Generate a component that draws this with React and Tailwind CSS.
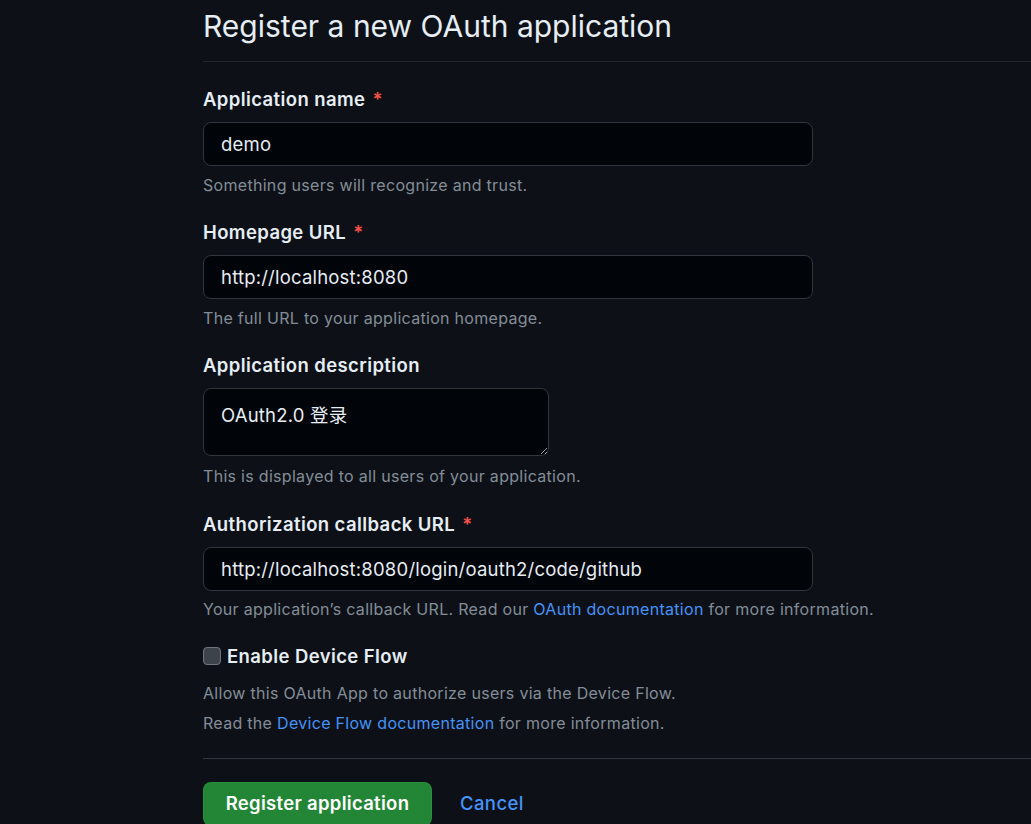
const font = { fontFamily: '"Inter", "Noto Sans CJK SC", sans-serif' };

function Label({ children, required }) {
  return (
    <label className="block text-[18.5px] font-semibold leading-[22px] tracking-[0.4px] text-[#e6edf3]">
      {children}
      {required && <span className="ml-[7px] text-[#f85149]">*</span>}
    </label>
  );
}

function Help({ children }) {
  return <p className="text-[16px] leading-[20px] tracking-[0.3px] text-[#848d97]">{children}</p>;
}

function TextInput({ value }) {
  return (
    <input
      readOnly
      value={value}
      className="mt-3 block h-[44px] w-[610px] rounded-lg border border-[#30363d] bg-[#010409] px-[17px] text-[18.5px] tracking-[0.2px] text-[#e6edf3] outline-none"
    />
  );
}

export default function App() {
  return (
    <div className="min-h-[824px] overflow-hidden bg-[#0d1117] pl-[203px] pt-[6px]" style={font}>
      <h1 className="border-b border-[#21262d] pb-[15px] text-[30px] font-normal leading-[40px] text-[#e6edf3]">
        Register a new OAuth application
      </h1>

      <div className="mt-[26px]">
        <Label required>Application name</Label>
        <TextInput value="demo" />
        <div className="mt-[9px]">
          <Help>Something users will recognize and trust.</Help>
        </div>
      </div>

      <div className="mt-[26px]">
        <Label required>Homepage URL</Label>
        <TextInput value="http://localhost:8080" />
        <div className="mt-[9px]">
          <Help>The full URL to your application homepage.</Help>
        </div>
      </div>

      <div className="mt-[26px]">
        <Label>Application description</Label>
        <textarea
          readOnly
          value="OAuth2.0 登录"
          className="mt-3 block h-[68px] w-[346px] resize rounded-lg border border-[#30363d] bg-[#010409] px-[17px] pt-[15px] text-[18.5px] leading-[22px] tracking-[0.2px] text-[#e6edf3] outline-none"
        />
        <div className="mt-[10px]">
          <Help>This is displayed to all users of your application.</Help>
        </div>
      </div>

      <div className="mt-[27px]">
        <Label required>Authorization callback URL</Label>
        <TextInput value="http://localhost:8080/login/oauth2/code/github" />
        <div className="mt-[8px]">
          <Help>
            Your application’s callback URL. Read our{' '}
            <a className="text-[#4493f8]">OAuth documentation</a> for more information.
          </Help>
        </div>
      </div>

      <div className="mt-[26px] flex items-center gap-[6px]">
        <span className="block h-[18px] w-[18px] rounded-[4px] border border-[#6e7681] bg-[#3d434b]" />
        <span className="text-[18.5px] font-semibold leading-[22px] tracking-[0.4px] text-[#e6edf3]">Enable Device Flow</span>
      </div>
      <div className="mt-[16px] space-y-[10px]">
        <Help>Allow this OAuth App to authorize users via the Device Flow.</Help>
        <Help>
          Read the <a className="text-[#4493f8]">Device Flow documentation</a> for more information.
        </Help>
      </div>

      <div className="mt-[25px] border-t border-[#30363d] pt-[23px]">
        <div className="flex items-center gap-[28px]">
          <button className="h-[44px] w-[229px] rounded-lg border border-[#2ea043]/40 bg-[#238636] text-[18.5px] font-semibold tracking-[0.3px] text-white">
            Register application
          </button>
          <a className="text-[18.5px] font-medium tracking-[0.4px] text-[#4493f8]">Cancel</a>
        </div>
      </div>
    </div>
  );
}
